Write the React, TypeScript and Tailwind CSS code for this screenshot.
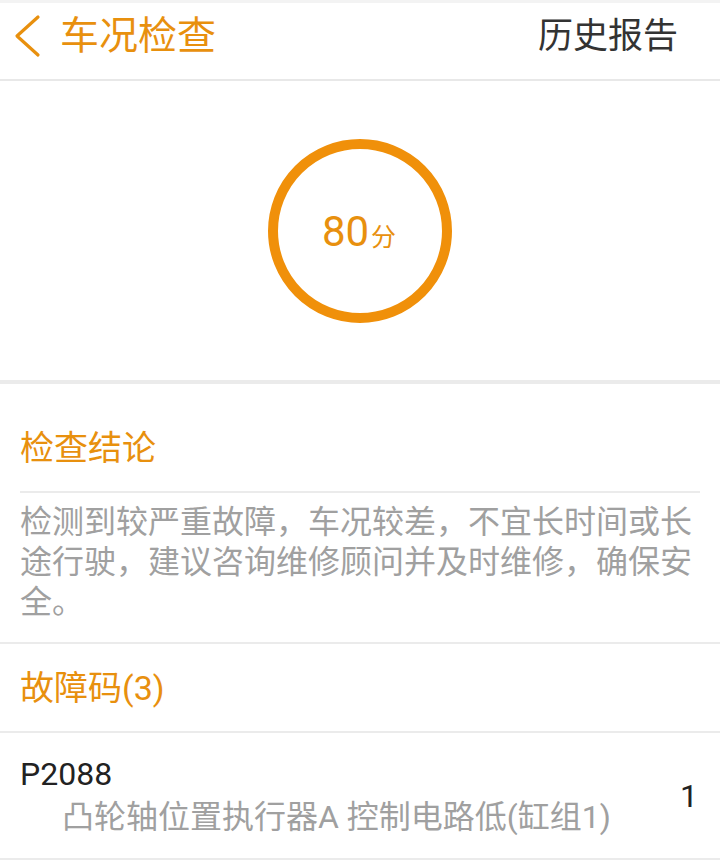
import React from "react";

const font = { fontFamily: 'Roboto, "Noto Sans CJK SC", "Noto Sans", sans-serif' };

export default function App() {
  return (
    <div className="w-[720px] h-[865px] bg-white overflow-hidden" style={font}>
      {/* header */}
      <div className="h-[79px] relative flex items-center pb-[8px]">
        <div className="absolute top-0 left-0 right-0 h-[3px] bg-[#f3f3f3]" />
        <svg width="30" height="44" viewBox="0 0 30 44" className="ml-[12px] shrink-0">
          <polyline points="26,3 5,22 26,41" fill="none" stroke="#e8900e" strokeWidth="3.2" strokeLinecap="round" strokeLinejoin="round" />
        </svg>
        <div className="ml-[18px] text-[39px] leading-[44px] text-[#e8900e]">车况检查</div>
        <div className="ml-auto mr-[42px] text-[35px] leading-[44px] text-[#333333] pt-[2px]">历史报告</div>
      </div>
      <div className="h-[2px] bg-[#e8e8e8]" />

      {/* score */}
      <div className="h-[299px] flex items-center justify-center">
        <div className="w-[184px] h-[184px] rounded-full border-[10px] border-[#f0900a] flex items-center justify-center">
          <div className="flex items-baseline text-[#e8900e] mt-[2px] -ml-[2px]">
            <span className="text-[42px] leading-[48px]">80</span>
            <span className="text-[25px] leading-[30px] ml-[2px]">分</span>
          </div>
        </div>
      </div>
      <div className="h-[4px] bg-[#ebebeb]" />

      {/* conclusion */}
      <div className="h-[107px] flex items-center pt-[20px] px-[20px]">
        <div className="text-[34px] leading-[40px] text-[#e8900e]">检查结论</div>
      </div>
      <div className="h-[2px] mx-[20px] bg-[#ebebeb]" />
      <div className="px-[20px] pt-[9px] pb-[20px] h-[149px]">
        <p className="text-[32px] leading-[40px] text-[#a0a0a0]">
          检测到较严重故障，车况较差，不宜长时间或长途行驶，建议咨询维修顾问并及时维修，确保安全。
        </p>
      </div>
      <div className="h-[2px] bg-[#ebebeb]" />

      {/* fault codes */}
      <div className="h-[87px] flex items-center px-[20px]">
        <div className="text-[34px] leading-[40px] text-[#e8900e]">故障码(3)</div>
      </div>
      <div className="h-[2px] bg-[#ebebeb]" />
      <div className="h-[125px] flex items-center px-[20px]">
        <div className="flex flex-col gap-[3px]">
          <div className="text-[32px] leading-[40px] text-[#222222]">P2088</div>
          <div className="text-[32px] leading-[40px] text-[#a0a0a0] pl-[42px]">凸轮轴位置执行器A 控制电路低(缸组1)</div>
        </div>
        <div className="ml-auto mr-[2px] text-[32px] leading-[40px] text-[#222222]">1</div>
      </div>
      <div className="h-[2px] bg-[#ebebeb]" />
    </div>
  );
}
